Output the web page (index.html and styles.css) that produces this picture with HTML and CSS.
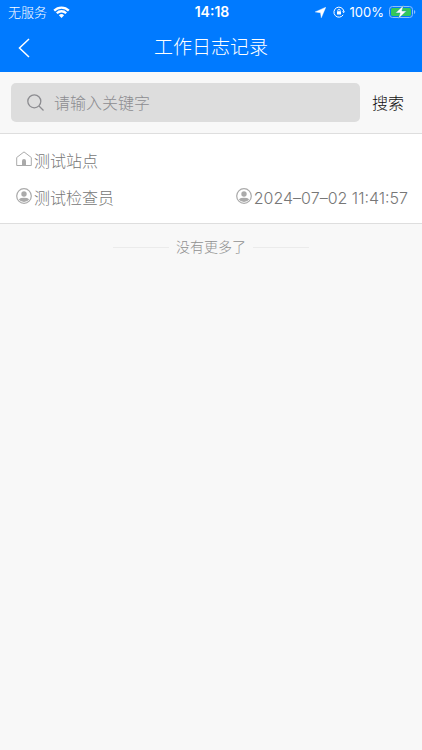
FILE: index.html
```html
<!DOCTYPE html>
<html lang="zh-CN">
<head>
<meta charset="utf-8">
<meta name="viewport" content="width=device-width, initial-scale=1">
<title>工作日志记录</title>
<link rel="stylesheet" href="styles.css">
</head>
<body>
<svg class="defs" aria-hidden="true">
  <symbol id="person" viewBox="0 0 16 16">
    <circle cx="8" cy="8" r="7.300" fill="none" stroke="currentColor" stroke-width="1.200"/>
    <circle cx="8" cy="6" r="2.700" fill="currentColor"/>
    <path d="M2.800 11.200Q4.500 9.800 8 9.800T13.200 11.200Q11.500 14 8 14T2.800 11.200z" fill="currentColor"/>
  </symbol>
</svg>
<header class="top">
  <div class="status">
    <div class="status-side">
      <span>无服务</span>
      <svg class="wifi" viewBox="0 0 17 12" aria-hidden="true">
        <path d="M1.200 4.600a10.300 10.300 0 0 1 14.600 0M3.800 7.200a6.700 6.700 0 0 1 9.400 0" fill="none" stroke="currentColor" stroke-width="2.300"/>
        <path d="M5.900 9.300a3.700 3.700 0 0 1 5.200 0L8.500 12z" fill="currentColor"/>
      </svg>
    </div>
    <time class="clock">14:18</time>
    <div class="status-side status-end">
      <svg class="arrow" viewBox="0 0 11 11" aria-hidden="true"><path d="M10.800.2 6.300 10.800 5.500 5.700.2 4.900z" fill="currentColor" stroke="currentColor" stroke-width=".4"/></svg>
      <svg class="lock" viewBox="0 0 12 12" aria-hidden="true">
        <path d="M10.800 5A5 5 0 1 0 10.200 8.800" fill="none" stroke="currentColor"/>
        <path d="M9.100 5.300h2.900l-1.300 2z" fill="currentColor"/>
        <rect x="4" y="5.300" width="4" height="3.200" rx=".5" fill="currentColor"/>
        <path d="M4.800 5.500v-1a1.200 1.200 0 0 1 2.400 0v1" fill="none" stroke="currentColor" stroke-width=".8"/>
      </svg>
      <span class="percent">100%</span>
      <svg class="battery" viewBox="0 0 27 14" aria-hidden="true">
        <rect x=".5" y="1.500" width="23" height="11" rx="3" fill="none" stroke="#8cbfff"/>
        <path d="M25 5v4q1.300-.6 1.300-2T25 5z" fill="#8cbfff"/>
        <rect x="2" y="3" width="20" height="8" rx="1.700" fill="#35c85a"/>
        <path d="M14.500.3 6.500 7.900h4.600L9.300 13.700 17.500 6h-4.600z" fill="#fff" stroke="#168ba8" stroke-width=".4"/>
      </svg>
    </div>
  </div>
  <div class="nav">
    <button class="back" type="button" aria-label="返回">
      <svg viewBox="0 0 12 20" aria-hidden="true"><path d="M11 1 1.500 10 11 19" fill="none" stroke="currentColor" stroke-width="1.500"/></svg>
    </button>
    <h1>工作日志记录</h1>
  </div>
</header>
<main>
  <form class="search" role="search">
    <label class="field">
      <svg viewBox="0 0 17 17" aria-hidden="true"><circle cx="7.300" cy="7.300" r="6.500"/><path d="m12 12 4.500 4.500"/></svg>
      <input type="search" placeholder="请输入关键字" aria-label="关键字">
    </label>
    <button class="submit" type="submit">搜索</button>
  </form>
  <article class="record">
    <div class="row">
      <span class="item">
        <svg viewBox="0 0 16 16" aria-hidden="true">
          <path d="M.7 6.500 8 .9l7.300 5.600V14.500H.7z" fill="none" stroke="currentColor"/>
          <path d="M6 14.500V10a2 2 0 0 1 4 0v4.500z" fill="currentColor"/>
        </svg>
        <span>测试站点</span>
      </span>
    </div>
    <div class="row">
      <span class="item"><svg aria-hidden="true"><use href="#person"/></svg><span>测试检查员</span></span>
      <span class="item"><svg aria-hidden="true"><use href="#person"/></svg><time class="date">2024–07–02 11:41:57</time></span>
    </div>
  </article>
  <p class="end">没有更多了</p>
</main>
</body>
</html>
```
FILE: styles.css
```css
* { box-sizing: border-box; }
body {
  margin: 0;
  min-height: 100vh;
  background: #f8f8f8;
  color: #777;
  font-family: Inter, "Noto Sans CJK SC", sans-serif;
  font-size: 16px;
  font-weight: 300;
}
svg { display: block; flex: none; }
button, input { font: inherit; border: 0; padding: 0; background: none; }
.defs { position: absolute; width: 0; height: 0; }

.top { background: #007aff; color: #fff; }
.status {
  display: grid;
  grid-template-columns: 1fr auto 1fr;
  align-items: center;
  height: 24px;
  padding: 0 6px 0 8px;
  font-size: 13px;
  font-weight: 400;
  line-height: 24px;
}
.status-side { display: flex; align-items: center; gap: 6px; font-weight: 300; }
.status-end { justify-content: flex-end; gap: 5px; font-weight: 400; }
.wifi { width: 17px; height: 12px; }
.clock { font-size: 14px; font-weight: 600; }
.arrow { width: 11px; height: 11px; margin-right: 2px; }
.lock { width: 12px; height: 12px; }
.battery { width: 27px; height: 14px; }
.nav {
  display: grid;
  grid-template-columns: 48px 1fr 48px;
  align-items: center;
  height: 48px;
}
.back { display: flex; align-items: center; height: 48px; padding-left: 18px; color: inherit; }
.back svg { width: 12px; height: 20px; }
h1 {
  margin: 0;
  font-size: 19px;
  font-weight: 300;
  line-height: 48px;
  text-align: center;
}

.search {
  display: flex;
  align-items: center;
  padding: 11px 0 11px 11px;
  border-bottom: 1px solid #dedede;
}
.field {
  display: flex;
  flex: 1;
  align-items: center;
  gap: 10px;
  min-width: 0;
  height: 39px;
  padding: 0 16px;
  border-radius: 5px;
  background: #ddd;
}
.field svg { width: 17px; height: 17px; fill: none; stroke: #8c8c90; stroke-width: 1.3; }
.field input { flex: 1; min-width: 0; height: 39px; outline: 0; color: #333; appearance: none; }
.field input::placeholder { color: #8c8c90; opacity: 1; }
.submit { width: 62px; padding-right: 6px; height: 39px; color: #111; line-height: 38px; text-align: center; }

.record {
  padding: 8px 14px 7px 16px;
  border-bottom: 1px solid #dedede;
  background: #fff;
}
.row { display: flex; justify-content: space-between; height: 37px; align-items: center; }
.item { display: flex; align-items: center; gap: 2px; line-height: 24px; }
.item svg { width: 16px; height: 16px; margin-bottom: 3px; color: #aaa; }

.end {
  display: flex;
  align-items: center;
  justify-content: center;
  gap: 7px;
  margin: 11px 0 0;
  color: #909090;
  font-size: 14px;
  line-height: 24px;
}
.end::before, .end::after { content: ""; width: 56px; height: 1px; background: #ebebeb; }
```
